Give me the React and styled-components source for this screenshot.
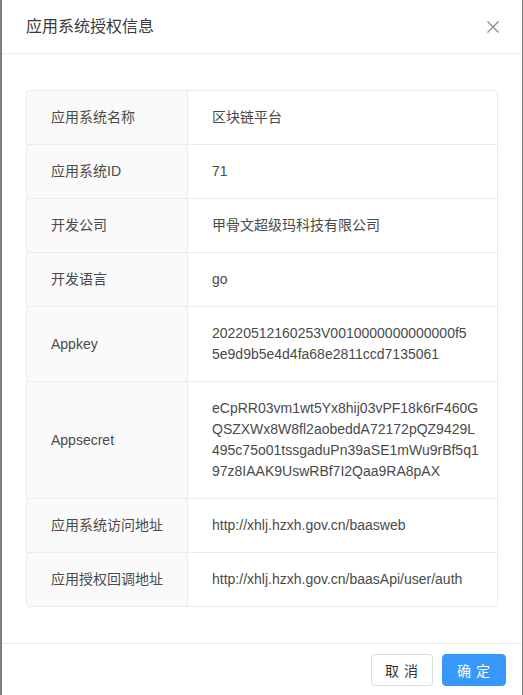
import React from "react";
import styled, { createGlobalStyle } from "styled-components";

const GlobalStyle = createGlobalStyle`
  * {
    box-sizing: border-box;
  }
  html,
  body {
    margin: 0;
    overflow: hidden;
    background: #7f7f7f;
    font-family: "Liberation Sans", "Noto Sans CJK SC", sans-serif;
  }
`;

const Modal = styled.div`
  margin-left: 2px;
  width: 520px;
  background: #fff;
`;

const Header = styled.div`
  display: flex;
  align-items: center;
  justify-content: space-between;
  padding: 16px 22px 15px 24px;
  border-bottom: 1px solid #ebebeb;
`;

const Title = styled.div`
  font-size: 16px;
  line-height: 22px;
  color: #3a3a3a;
`;

const CloseButton = styled.button`
  display: flex;
  border: 0;
  background: none;
  padding: 0;
  cursor: pointer;
`;

const Body = styled.div`
  padding: 36px 24px;
`;

const TableWrap = styled.div`
  border: 1px solid #ebebeb;
  border-radius: 4px;
  overflow: hidden;
`;

const Table = styled.table`
  width: 100%;
  border-collapse: separate;
  border-spacing: 0;
  table-layout: fixed;
  font-size: 14px;
  line-height: 21px;
  color: #4a4a4a;
`;

const Row = styled.tr`
  &:last-child > * {
    border-bottom: 0;
  }
`;

const Label = styled.th`
  width: 161px;
  padding: 16px 24px;
  background: #fafafa;
  border-right: 1px solid #ebebeb;
  border-bottom: 1px solid #ebebeb;
  font-weight: 400;
  text-align: left;
  vertical-align: middle;
`;

const Value = styled.td`
  padding: 16px 24px;
  border-bottom: 1px solid #ebebeb;
  word-break: break-all;
  vertical-align: middle;
`;

const Line = styled.span`
  display: block;
  white-space: nowrap;
`;

const Footer = styled.div`
  display: flex;
  justify-content: flex-end;
  gap: 9px;
  padding: 10px 16px;
  border-top: 1px solid #ebebeb;
`;

const Button = styled.button`
  width: ${(p) => p.$width}px;
  height: 32px;
  padding: 0;
  border-radius: 4px;
  font-family: "Noto Sans CJK SC", sans-serif;
  font-size: 14px;
  letter-spacing: 1px;
  cursor: pointer;
  border: 1px solid ${(p) => (p.$primary ? "#3898fa" : "#dcdcdc")};
  background: ${(p) => (p.$primary ? "#3898fa" : "#fff")};
  color: ${(p) => (p.$primary ? "#fff" : "#333")};
`;

const rows = [
  ["应用系统名称", ["区块链平台"]],
  ["应用系统ID", ["71"]],
  ["开发公司", ["甲骨文超级玛科技有限公司"]],
  ["开发语言", ["go"]],
  ["Appkey", ["20220512160253V0010000000000000f5", "5e9d9b5e4d4fa68e2811ccd7135061"]],
  [
    "Appsecret",
    [
      "eCpRR03vm1wt5Yx8hij03vPF18k6rF460G",
      "QSZXWx8W8fl2aobeddA72172pQZ9429L",
      "495c75o01tssgaduPn39aSE1mWu9rBf5q1",
      "97z8IAAK9UswRBf7I2Qaa9RA8pAX",
    ],
  ],
  ["应用系统访问地址", ["http://xhlj.hzxh.gov.cn/baasweb"]],
  ["应用授权回调地址", ["http://xhlj.hzxh.gov.cn/baasApi/user/auth"]],
];

export default function App() {
  return (
    <>
      <GlobalStyle />
      <Modal>
        <Header>
          <Title>应用系统授权信息</Title>
          <CloseButton aria-label="close">
            <svg width="14" height="14" viewBox="0 0 14 14">
              <path
                d="M1.5 1.5 L12.5 12.5 M12.5 1.5 L1.5 12.5"
                stroke="#8c8c8c"
                strokeWidth="1.3"
                fill="none"
              />
            </svg>
          </CloseButton>
        </Header>
        <Body>
          <TableWrap>
            <Table>
              <tbody>
                {rows.map(([label, lines]) => (
                  <Row key={label}>
                    <Label>{label}</Label>
                    <Value>
                      {lines.map((line) => (
                        <Line key={line}>{line}</Line>
                      ))}
                    </Value>
                  </Row>
                ))}
              </tbody>
            </Table>
          </TableWrap>
        </Body>
        <Footer>
          <Button $width={62}>取 消</Button>
          <Button $width={64} $primary>
            确 定
          </Button>
        </Footer>
      </Modal>
    </>
  );
}
